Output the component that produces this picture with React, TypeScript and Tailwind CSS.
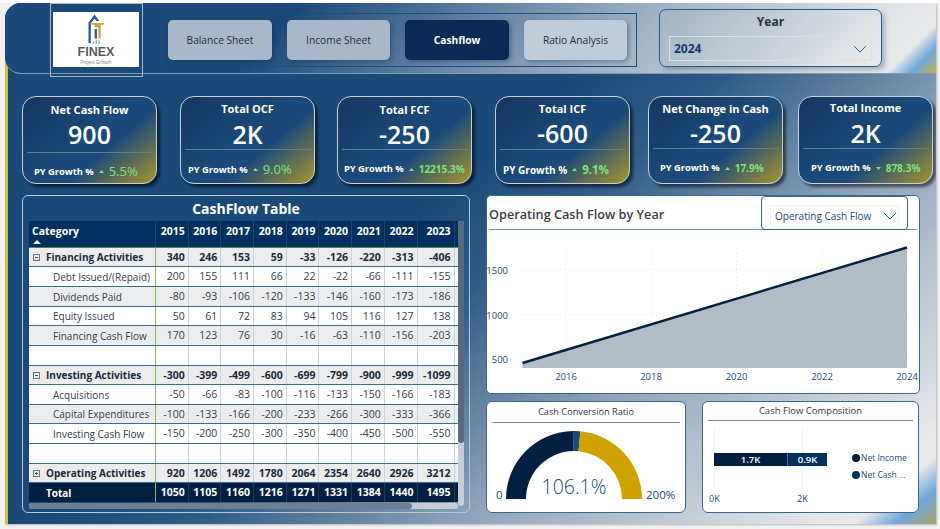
import React from "react";

const font = { fontFamily: '"Open Sans", "Noto Sans", sans-serif' };

type RowT = { label: string; v: (string | number)[]; kind: "section" | "child" | "blank" | "total"; shade?: boolean; icon?: "minus" | "plus"; h: string };

const rows: RowT[] = [
  { label: "Financing Activities", v: [340, 246, 153, 59, -33, -126, -220, -313, -406], kind: "section", icon: "minus", h: "h-[19px]" },
  { label: "Debt Issued/(Repaid)", v: [200, 155, 111, 66, 22, -22, -66, -111, -155], kind: "child", h: "h-[20px]" },
  { label: "Dividends Paid", v: [-80, -93, -106, -120, -133, -146, -160, -173, -186], kind: "child", shade: true, h: "h-[20px]" },
  { label: "Equity Issued", v: [50, 61, 72, 83, 94, 105, 116, 127, 138], kind: "child", h: "h-[19px]" },
  { label: "Financing Cash Flow", v: [170, 123, 76, 30, -16, -63, -110, -156, -203], kind: "child", shade: true, h: "h-[20px]" },
  { label: "", v: ["", "", "", "", "", "", "", "", ""], kind: "blank", h: "h-[20px]" },
  { label: "Investing Activities", v: [-300, -399, -499, -600, -699, -799, -900, -999, -1099], kind: "section", icon: "minus", h: "h-[19px]" },
  { label: "Acquisitions", v: [-50, -66, -83, -100, -116, -133, -150, -166, -183], kind: "child", h: "h-[20px]" },
  { label: "Capital Expenditures", v: [-100, -133, -166, -200, -233, -266, -300, -333, -366], kind: "child", shade: true, h: "h-[19px]" },
  { label: "Investing Cash Flow", v: [-150, -200, -250, -300, -350, -400, -450, -500, -550], kind: "child", h: "h-[20px]" },
  { label: "", v: ["", "", "", "", "", "", "", "", ""], kind: "blank", h: "h-[20px]" },
  { label: "Operating Activities", v: [920, 1206, 1492, 1780, 2064, 2354, 2640, 2926, 3212], kind: "section", icon: "plus", h: "h-[19px]" },
];
const total = [1050, 1105, 1160, 1216, 1271, 1331, 1384, 1440, 1495];
const years = [2015, 2016, 2017, 2018, 2019, 2020, 2021, 2022, 2023];
const cols = "grid grid-cols-[127px_repeat(8,32.7px)_37px_3px]";

function Expander({ type }: { type: "minus" | "plus" }) {
  return (
    <svg width="7" height="7" viewBox="0 0 7 7" className="ml-1 mr-[6px] shrink-0">
      <rect x="0.5" y="0.5" width="6" height="6" fill="none" stroke="#6f7680" />
      <path d={type === "minus" ? "M2 3.5H5" : "M2 3.5H5M3.5 2V5"} stroke="#4f5660" />
    </svg>
  );
}

function TableRow({ r }: { r: RowT }) {
  const bold = r.kind === "section";
  const bg = bold || r.shade ? "bg-[#ebecee]" : "bg-white";
  const txt = bold ? "font-bold text-[#1d2a3a]" : "text-[#33404f]";
  return (
    <div className={`${cols} ${r.h} ${bg} ${txt} border-b border-[#3f6a94] text-[10.5px] leading-none`}>
      <div className={`flex items-center border-r-[1.5px] border-[#7dbb5f] whitespace-nowrap text-[10px] ${bold ? "" : "pl-[24px]"}`}>
        {r.icon && <Expander type={r.icon} />}
        {r.label}
      </div>
      {r.v.map((x, i) => (
        <div key={i} className="flex items-center justify-end pr-[3px] border-r border-[#c8d3df]">{x}</div>
      ))}
      <div />
    </div>
  );
}

function CashTable() {
  return (
    <div className="w-[448px] h-[318px] rounded-[6px] border border-[#b9c7d6] flex flex-col">
      <div className="h-[25px] flex items-center justify-center text-white font-bold text-[14px]">CashFlow Table</div>
      <div className="flex pl-[6px]">
        <div className="w-[429px]">
          <div className={`${cols} h-[27px] bg-[#00305f] text-white font-bold text-[10.5px] leading-none border-b border-[#4a8a5f]`}>
            <div className="relative flex items-start pt-[5px] pl-[3px] border-r border-[#1b4672]">
              Category
              <svg width="8" height="4" viewBox="0 0 8 4" className="absolute left-[4px] bottom-[3px]"><path d="M0 4L4 0L8 4Z" fill="#fff" /></svg>
            </div>
            {years.map((y) => (
              <div key={y} className="flex items-start justify-end pt-[5px] pr-[3px] border-r border-[#1b4672]">{y}</div>
            ))}
            <div />
          </div>
          {rows.map((r, i) => <TableRow key={i} r={r} />)}
          <div className={`${cols} h-[19px] bg-[#021f42] text-white font-bold text-[10.5px] leading-none`}>
            <div className="flex items-center pl-[17px] border-r-[1.5px] border-[#7dbb5f] text-[10px]">Total</div>
            {total.map((x) => (
              <div key={x} className="flex items-center justify-end pr-[3px] border-r border-[#1b3a5e]">{x}</div>
            ))}
            <div />
          </div>
          <div className="h-[6px] bg-[#c5ced8] rounded-[3px] mt-[1px]">
            <div className="w-[383px] h-full rounded-[3px] bg-[#6d7f92]" />
          </div>
        </div>
        <div className="w-[6px] h-[285px] bg-[#c5ced8] rounded-[3px]">
          <div className="h-[222px] bg-[#56697f] rounded-[3px]" />
        </div>
      </div>
    </div>
  );
}

type CardP = { title: string; value: string; pct: string; cls: string; pctCls: string; top: string; vm: string; mid: string; pad: string; py?: string; down?: boolean };

function Card({ title, value, pct, cls, pctCls, top, vm, mid, pad, py = "text-[9.3px]", down }: CardP) {
  return (
    <div className={`w-[135px] h-[88px] rounded-[14px] border border-[#c3cfdb] flex flex-col items-center bg-[linear-gradient(140deg,#15365f_0%,#1b4a7a_50%,#1b4a7a_62%,#a8952c_100%)] shadow-[3px_3px_3px_rgba(0,0,0,0.55)] text-white ${cls}`}>
      <div className={`font-bold text-[11px] leading-none whitespace-nowrap ${top}`}>{title}</div>
      <div className={`font-semibold text-[25px] leading-none ${vm}`}>{value}</div>
      <div className={`w-[126px] border-t border-[#6a7d90] ${mid}`} />
      <div className={`w-full flex items-center font-bold leading-none whitespace-nowrap ${py} ${pad}`}>
        PY Growth %
        <svg width="5" height="3" viewBox="0 0 5 3" className="mx-[5px] shrink-0">
          <path d={down ? "M0 0H5L2.5 3Z" : "M0 3H5L2.5 0Z"} fill="#7fe27f" />
        </svg>
        <span className={`text-[#7fe27f] ${pctCls}`}>{pct}</span>
      </div>
    </div>
  );
}

function Logo() {
  return (
    <div className="w-[86px] h-[55px] bg-white flex flex-col items-center text-[#555b63]">
      <svg width="19" height="33" viewBox="0 0 20 35" className="mt-[1px] shrink-0">
        <path d="M1.5 32V10L8 1.5L13 8.5H10L8 6L4 11V32Z" fill="#2a5a9c" />
        <path d="M5 10.5H18V12.5H14.5V27H12V15H8V12.5H5Z" fill="#d5a63c" />
        <path d="M8 17H10.5V27H8Z" fill="#2a5a9c" />
        <path d="M6 30H7.5V33H6ZM9 28H10.5V33H9ZM12 29H13.5V33H12Z" fill="#9ab0cc" />
      </svg>
      <div className="font-bold text-[12.5px] leading-none" style={{ fontFamily: '"Liberation Sans", sans-serif' }}>FINEX</div>
      <div className="text-[4.5px] leading-none mt-[1px] text-[#777]">Project Growth</div>
    </div>
  );
}

function NavBtn({ label, cls }: { label: string; cls: string }) {
  return (
    <div className={`h-[40px] rounded-[5px] flex items-center justify-center pt-[2px] text-[10.2px] shadow-[2px_2px_4px_rgba(10,40,80,0.35)] ${cls}`}>{label}</div>
  );
}

function Chevron({ cls = "" }: { cls?: string }) {
  return (
    <svg width="14" height="8" viewBox="0 0 14 8" className={cls}>
      <path d="M1 1L7 7L13 1" fill="none" stroke="currentColor" strokeWidth="0.9" />
    </svg>
  );
}

function AreaChart() {
  const xs = [[566, "2016"], [651, "2018"], [736.5, "2020"], [822, "2022"], [907, "2024"]] as const;
  const ys = [[271, "1500"], [316, "1000"], [360, "500"]] as const;
  return (
    <svg width="432" height="163" viewBox="487 231 432 163" className="block">
      {xs.map(([x]) => <line key={x} x1={x} x2={x} y1="245" y2="369" stroke="#e3e6ea" strokeDasharray="1 3" />)}
      {ys.map(([y]) => <line key={y} x1="520" x2="912" y1={y} y2={y} stroke="#e3e6ea" strokeDasharray="1 3" />)}
      <path d="M522.5 364L907 248.5V369H522.5Z" fill="#b3bbc5" />
      <path d="M522.5 364L907 248.5" stroke="#03203f" strokeWidth="2.4" fill="none" />
      {ys.map(([y, t]) => <text key={t} x="508" y={y + 4} textAnchor="end" fontSize="9.5" fill="#1c4a78">{t}</text>)}
      {xs.map(([x, t]) => <text key={t} x={x} y="381" textAnchor="middle" fontSize="9.5" fill="#1c4a78">{t}</text>)}
    </svg>
  );
}

function arc(a0: number, a1: number, R = 68, r = 48) {
  const p = (rad: number, a: number) => {
    const t = Math.PI * (1 - a);
    return `${(70 + rad * Math.cos(t)).toFixed(2)} ${(70 - rad * Math.sin(t)).toFixed(2)}`;
  };
  return `M${p(R, a0)}A${R} ${R} 0 0 1 ${p(R, a1)}L${p(r, a1)}A${r} ${r} 0 0 0 ${p(r, a0)}Z`;
}

function Gauge() {
  return (
    <div className="relative flex-1 pl-[17px]">
      <svg width="140" height="72" viewBox="0 0 140 72" className="mt-[6px]">
        <path d={arc(0, 0.495)} fill="#021f42" />
        <path d={arc(0.495, 0.53)} fill="#1c4a78" />
        <path d={arc(0.53, 1)} fill="#cfa200" />
      </svg>
      <span className="absolute left-[47px] top-[54px] w-[80px] text-center text-[19.5px] leading-none font-light text-[#1c4a78] whitespace-nowrap">106.1%</span>
      <span className="absolute left-[9px] top-[66px] text-[11.5px] leading-none text-[#1c4a78]">0</span>
      <span className="absolute left-[159px] top-[66px] text-[11.5px] leading-none text-[#1c4a78]">200%</span>
    </div>
  );
}

function Composition() {
  return (
    <div className="relative flex-1 text-[#1c4a78]">
      <div className="absolute left-[11px] top-[8px] h-[62px] border-l border-dotted border-[#e6e9ec]" />
      <div className="absolute left-[99px] top-[8px] h-[62px] border-l border-dotted border-[#e6e9ec]" />
      <div className="absolute left-[11px] top-[32px] w-[113px] h-[13px] flex text-white text-[9.5px] font-semibold leading-none">
        <div className="w-[73px] bg-[#021f42] flex items-center justify-center">1.7K</div>
        <div className="flex-1 bg-[#00305f] border-l border-[#3f6a94] flex items-center justify-center">0.9K</div>
      </div>
      <span className="absolute left-[6px] top-[73px] text-[9px] leading-none">0K</span>
      <span className="absolute left-[94px] top-[73px] text-[9px] leading-none">2K</span>
      <div className="absolute left-[149px] top-[33px] flex items-center text-[8.5px] leading-none"><span className="w-[8px] h-[8px] rounded-full bg-[#021f42] mr-[1px]" />Net Income</div>
      <div className="absolute left-[149px] top-[50px] flex items-center text-[8.5px] leading-none"><span className="w-[8px] h-[8px] rounded-full bg-[#00305f] mr-[1px]" />Net Cash ...</div>
    </div>
  );
}

export default function App() {
  return (
    <div className="w-[940px] h-[529px] bg-[#f2f2f2] overflow-hidden" style={font}>
      <div className="h-[3px] bg-white" />
      <div className="ml-[5px] w-[931px] h-[521px] flex flex-col rounded-tl-[16px] bg-[#1c4a78] overflow-hidden shadow-[1px_1px_2px_rgba(0,0,0,0.25)]">
        <div className="h-[71px] shrink-0 flex items-start pl-[45px] rounded-bl-[16px] border-b border-[#7f9ab5] bg-[linear-gradient(135deg,#1c4a78_0%,#1c4a78_30%,#5f80a2_48%,#9db0c2_65%,#e2e5e8_90%,#e8e9ea_95%,#6fa8dc_97.5%,#bfb04e_100%)] relative z-10">
          <div className="w-[93px] h-[74px] shrink-0 border border-[#a9b9c9] pt-[8px] pl-[2px]">
            <Logo />
          </div>
          <div className="ml-[18px] mt-[10px] w-[476px] h-[54px] border border-[#1d4d80] flex items-center pl-[6px] gap-[15px]">
            <NavBtn label="Balance Sheet" cls="w-[104px] bg-[#a8b8c9] text-[#1f3048]" />
            <NavBtn label="Income Sheet" cls="w-[103px] bg-[#a8b8c9] text-[#1f3048]" />
            <NavBtn label="Cashflow" cls="w-[104px] bg-[#0a2a55] text-white font-bold" />
            <NavBtn label="Ratio Analysis" cls="w-[103px] bg-[#c0ccd9] text-[#1f3048]" />
          </div>
          <div className="ml-[22px] mt-[6px] w-[223px] h-[58px] rounded-[7px] border border-[#2a5a8c] shadow-[3px_3px_5px_rgba(30,50,80,0.3)] flex flex-col items-center">
            <div className="font-bold text-[12px] text-[#2b2f36] leading-none mt-[6px]">Year</div>
            <div className="mt-[8px] w-[203px] h-[25px] border border-[#d8dfe6] flex items-center justify-between pl-[4px] pr-[3px] text-[#0d3b70] font-bold text-[12px]">
              2024
              <Chevron cls="text-[#1c4a78] mr-[1px]" />
            </div>
          </div>
        </div>
        <div className="flex-1 border-l-[3px] border-[#d4c23c] -mt-[16px] pt-[38px] pl-[14px] bg-[linear-gradient(140deg,#1c4a78_0%,#1c4a78_40%,#2f5c86_50%,#8fa4ba_68%,#c9d1da_84%,#e6e8ea_92%,#e8e9ea_94.5%,#6fa8dc_97.2%,#a9a565_100%)]">
          <div className="flex items-start">
            <Card title="Net Cash Flow" value="900" pct="5.5%" cls="" pctCls="text-[13px] font-normal" top="mt-[7px]" vm="mt-[7px]" mid="mt-[5px]" pad="pl-[11px] mt-[12px]" />
            <Card title="Total OCF" value="2K" pct="9.0%" cls="ml-[23px]" pctCls="text-[13px] font-normal" top="mt-[6px]" vm="mt-[8px]" mid="mt-[2px]" pad="pl-[7px] mt-[13px]" />
            <Card title="Total FCF" value="-250" pct="12215.3%" cls="ml-[22px]" pctCls="text-[10px]" top="mt-[7px]" vm="mt-[7px]" mid="mt-[2px]" pad="pl-[6px] mt-[14px]" />
            <Card title="Total ICF" value="-600" pct="9.1%" cls="ml-[23px]" pctCls="text-[11.5px]" top="mt-[6px]" vm="mt-[7px]" mid="mt-[3px]" pad="pl-[7px] mt-[14px]" py="text-[10px]" />
            <Card title="Net Change in Cash" value="-250" pct="17.9%" cls="ml-[18px]" pctCls="text-[10px]" top="mt-[6px]" vm="mt-[7px]" mid="mt-[2px]" pad="pl-[11px] mt-[14px]" />
            <Card title="Total Income" value="2K" pct="878.3%" cls="ml-[15px]" pctCls="text-[10px]" top="mt-[5px]" vm="mt-[8px]" mid="mt-[2px]" pad="pl-[12px] mt-[14px]" down />
          </div>
          <div className="flex items-start mt-[11px]">
            <CashTable />
            <div className="ml-[16px] w-[434px] flex flex-col gap-[7px]">
              <div className="h-[199px] bg-white rounded-[5px] border border-[#3a6690] flex flex-col">
                <div className="h-[34px] mx-[2px] flex items-start justify-between border-b border-[#6f90b0]">
                  <div className="text-[12.7px] font-semibold text-[#3b4048] leading-none mt-[12px]">Operating Cash Flow by Year</div>
                  <div className="w-[147px] h-[34px] mr-[9px] border border-[#3a6690] rounded-[4px] px-[8px] pt-[8px]">
                    <div className="h-[22px] border border-[#eef1f4] flex items-center justify-between pl-[4px] pr-[1px] text-[10px] text-[#1c4a78]">
                      Operating Cash Flow
                      <Chevron cls="text-[#1c4a78]" />
                    </div>
                  </div>
                </div>
                <AreaChart />
              </div>
              <div className="flex gap-[16px]">
                <div className="w-[200px] h-[112px] bg-white rounded-[6px] border border-[#3a6690] flex flex-col">
                  <div className="h-[21px] mx-[5px] border-b border-[#6f90b0] flex items-center justify-center text-[9.2px] font-medium text-[#33383f]">Cash Conversion Ratio</div>
                  <Gauge />
                </div>
                <div className="w-[217px] h-[112px] bg-white rounded-[6px] border border-[#3a6690] flex flex-col">
                  <div className="h-[19px] mx-[5px] border-b border-[#6f90b0] flex items-center justify-center text-[9.5px] font-medium text-[#33383f]">Cash Flow Composition</div>
                  <Composition />
                </div>
              </div>
            </div>
          </div>
        </div>
      </div>
    </div>
  );
}
